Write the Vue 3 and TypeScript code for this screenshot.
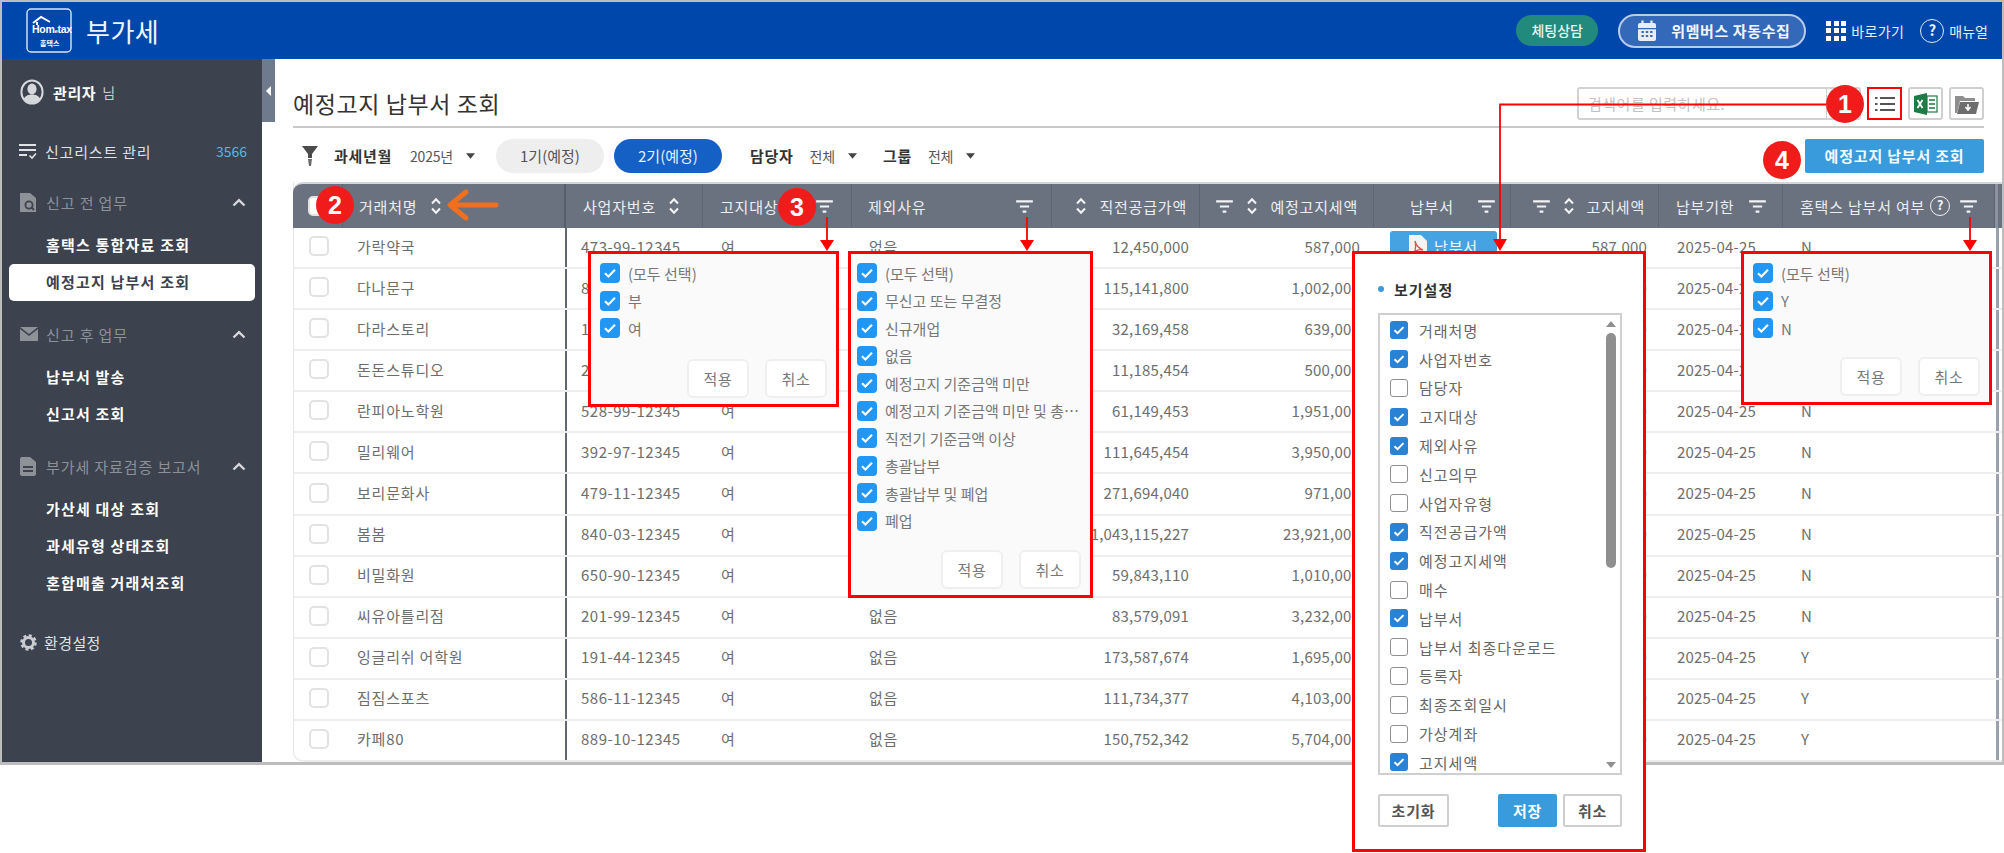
<script setup lang="ts">
type Part = 's' | 'f' | 'q' | 't'
interface Col { key: string; label: string; parts: Part[]; cls: string }
interface Row { name: string; biz: string; supply: string; notice: string; tax: string; flag: string }
interface Opt { label: string; on: boolean }

const cols: Col[] = [
  { key: 'c0', label: '', parts: [], cls: 'c-check' },
  { key: 'c1', label: '거래처명', parts: ['t', 's'], cls: 'c-name' },
  { key: 'c2', label: '사업자번호', parts: ['t', 's'], cls: 'c-biz' },
  { key: 'c3', label: '고지대상', parts: ['t', 'f'], cls: 'c-target' },
  { key: 'c4', label: '제외사유', parts: ['t', 'f'], cls: 'c-reason' },
  { key: 'c5', label: '직전공급가액', parts: ['s', 't'], cls: 'c-supply' },
  { key: 'c6', label: '예정고지세액', parts: ['f', 's', 't'], cls: 'c-notice' },
  { key: 'c7', label: '납부서', parts: ['t', 'f'], cls: 'c-slip' },
  { key: 'c8', label: '고지세액', parts: ['f', 's', 't'], cls: 'c-tax' },
  { key: 'c9', label: '납부기한', parts: ['t', 'f'], cls: 'c-date' },
  { key: 'c10', label: '홈택스 납부서 여부', parts: ['t', 'q', 'f'], cls: 'c-flag' },
]

const rows: Row[] = [
  { name: '가락약국', biz: '473-99-12345', supply: '12,450,000', notice: '587,000', tax: '587,000', flag: 'N' },
  { name: '다나문구', biz: '815-11-12345', supply: '115,141,800', notice: '1,002,000', tax: '1,002,000', flag: 'N' },
  { name: '다라스토리', biz: '124-32-12345', supply: '32,169,458', notice: '639,000', tax: '639,000', flag: 'N' },
  { name: '돈돈스튜디오', biz: '220-18-12345', supply: '11,185,454', notice: '500,000', tax: '500,000', flag: 'N' },
  { name: '란피아노학원', biz: '528-99-12345', supply: '61,149,453', notice: '1,951,000', tax: '1,951,000', flag: 'N' },
  { name: '밀리웨어', biz: '392-97-12345', supply: '111,645,454', notice: '3,950,000', tax: '3,950,000', flag: 'N' },
  { name: '보리문화사', biz: '479-11-12345', supply: '271,694,040', notice: '971,000', tax: '971,000', flag: 'N' },
  { name: '봄봄', biz: '840-03-12345', supply: '1,043,115,227', notice: '23,921,000', tax: '23,921,000', flag: 'N' },
  { name: '비밀화원', biz: '650-90-12345', supply: '59,843,110', notice: '1,010,000', tax: '1,010,000', flag: 'N' },
  { name: '씨유아틀리점', biz: '201-99-12345', supply: '83,579,091', notice: '3,232,000', tax: '3,232,000', flag: 'N' },
  { name: '잉글리쉬 어학원', biz: '191-44-12345', supply: '173,587,674', notice: '1,695,000', tax: '1,695,000', flag: 'Y' },
  { name: '짐짐스포츠', biz: '586-11-12345', supply: '111,734,377', notice: '4,103,000', tax: '4,103,000', flag: 'Y' },
  { name: '카페80', biz: '889-10-12345', supply: '150,752,342', notice: '5,704,000', tax: '5,704,000', flag: 'Y' },
]

const filterTarget: string[] = ['(모두 선택)', '부', '여']
const filterReason: string[] = [
  '(모두 선택)', '무신고 또는 무결정', '신규개업', '없음', '예정고지 기준금액 미만',
  '예정고지 기준금액 미만 및 총괄납부 사업자', '직전기 기준금액 이상', '총괄납부', '총괄납부 및 폐업', '폐업',
]
const filterFlag: string[] = ['(모두 선택)', 'Y', 'N']

const viewOpts: Opt[] = [
  { label: '거래처명', on: true }, { label: '사업자번호', on: true }, { label: '담당자', on: false },
  { label: '고지대상', on: true }, { label: '제외사유', on: true }, { label: '신고의무', on: false },
  { label: '사업자유형', on: false }, { label: '직전공급가액', on: true }, { label: '예정고지세액', on: true },
  { label: '매수', on: false }, { label: '납부서', on: true }, { label: '납부서 최종다운로드', on: false },
  { label: '등록자', on: false }, { label: '최종조회일시', on: false }, { label: '가상계좌', on: false },
  { label: '고지세액', on: true },
]

const popups = [
  { cls: 'pop-target', items: filterTarget },
  { cls: 'pop-reason', items: filterReason },
  { cls: 'pop-flag', items: filterFlag },
]

const badges = [
  { n: '1', cls: 'b1' }, { n: '2', cls: 'b2' }, { n: '3', cls: 'b3' }, { n: '4', cls: 'b4' },
]
</script>

<template>
  <div class="canvas">
    <svg class="defs" width="0" height="0">
      <symbol id="i-sort" viewBox="0 0 12 20">
        <path d="M2 7.5 6 3.2l4 4.3M2 12.5l4 4.3 4-4.3" fill="none" stroke="currentColor" stroke-width="2" />
      </symbol>
      <symbol id="i-filter" viewBox="0 0 18 14">
        <path d="M0 1.5h18M4 7h10M7 12.5h4" fill="none" stroke="currentColor" stroke-width="2.2" />
      </symbol>
      <symbol id="i-check" viewBox="0 0 20 20">
        <path d="M5 10.2l3.4 3.3L15 6.8" fill="none" stroke="#fff" stroke-width="2.2" />
      </symbol>
      <symbol id="i-caret" viewBox="0 0 10 6">
        <path d="M0 0h10L5 6z" fill="currentColor" />
      </symbol>
      <symbol id="i-up" viewBox="0 0 14 9">
        <path d="M1.5 7.5 7 2.2l5.5 5.3" fill="none" stroke="currentColor" stroke-width="2.4" />
      </symbol>
    </svg>

    <div class="window">
      <header class="topbar">
        <div class="logo">
          <svg width="46" height="45" viewBox="0 0 46 45">
            <rect x="1" y="1" width="44" height="43" rx="4" fill="none" stroke="#d9e6f7" stroke-width="1.4" />
            <path d="M7 15 15 9l9 5M11 14v3" fill="none" stroke="#fff" stroke-width="2" />
            <text x="6" y="25" class="logo-en">Hom<tspan font-size="6">e</tspan>tax</text>
            <text x="14" y="38" class="logo-ko">홈택스</text>
          </svg>
        </div>
        <span class="app-title">부가세</span>
        <div class="top-right">
          <span class="chat">체팅상담</span>
          <span class="wemembers">
            <svg width="20" height="22" viewBox="0 0 20 22">
              <path d="M1 5a2 2 0 0 1 2-2h14a2 2 0 0 1 2 2v3H1z" fill="#e9edf6" />
              <path d="M1 9.3h18V19a2 2 0 0 1-2 2H3a2 2 0 0 1-2-2z" fill="#e9edf6" />
              <path d="M5.5 0.5v5M14.5 0.5v5" stroke="#e9edf6" stroke-width="2.2" />
              <path d="M4.5 12h2.4M8.8 12h2.4M13.1 12h2.4M4.5 16h2.4M8.8 16h2.4M13.1 16h2.4" stroke="#3a6cb9" stroke-width="2.2" />
            </svg>
            <b>위멤버스 자동수집</b>
          </span>
          <span class="grid-icon"><i v-for="n in 9" :key="n"></i></span>
          <span class="top-link first">바로가기</span>
          <span class="help">?</span>
          <span class="top-link">매뉴얼</span>
        </div>
      </header>

      <div class="body">
        <aside class="sidebar">
          <div class="user">
            <svg width="24" height="26" viewBox="0 0 24 26">
              <ellipse cx="12" cy="13" rx="10.6" ry="11.6" fill="#3c424e" stroke="#d6d8dc" stroke-width="2" />
              <ellipse cx="12" cy="10" rx="4.6" ry="5.4" fill="#d6d8dc" />
              <path d="M3.6 20c1.6-3.4 4.8-4.6 8.4-4.6s6.8 1.2 8.4 4.6c-2 2.8-5 4-8.4 4s-6.400-1.200-8.400-4z" fill="#d6d8dc" />
            </svg>
            <b>관리자</b><span>님</span>
          </div>
          <div class="side-list">
            <svg width="18" height="18" viewBox="0 0 18 18">
              <path d="M0 3h17M0 8h17M0 13h8" stroke="#e0e2e5" stroke-width="2" fill="none" />
              <path d="M10.500 13.500l2.500 2.500 4-4.500" stroke="#e0e2e5" stroke-width="1.600" fill="none" />
            </svg>
            <span class="side-label">신고리스트 관리</span>
            <span class="count">3566</span>
          </div>

          <div class="side-group g1">
            <svg width="16" height="20" viewBox="0 0 16 20">
              <path d="M0 1h10l6 5v14H0z" fill="#8d9198" />
              <circle cx="9" cy="13" r="3.600" fill="none" stroke="#3c424e" stroke-width="1.800" />
              <path d="M11.500 15.500l2.500 2.500" stroke="#3c424e" stroke-width="1.800" />
            </svg>
            <span>신고 전 업무</span>
            <svg class="chev"><use href="#i-up" /></svg>
          </div>
          <div class="side-item">홈택스 통합자료 조회</div>
          <div class="side-item active">예정고지 납부서 조회</div>

          <div class="side-group g2">
            <svg width="18" height="14" viewBox="0 0 18 14">
              <path d="M0 0h18L9 7z" fill="#8d9198" />
              <path d="M0 2l9 7 9-7v12H0z" fill="#8d9198" />
            </svg>
            <span>신고 후 업무</span>
            <svg class="chev"><use href="#i-up" /></svg>
          </div>
          <div class="side-item">납부서 발송</div>
          <div class="side-item">신고서 조회</div>

          <div class="side-group g3">
            <svg width="16" height="19" viewBox="0 0 16 19">
              <path d="M0 2a2 2 0 0 1 2-2h8l6 5v12a2 2 0 0 1-2 2H2a2 2 0 0 1-2-2z" fill="#8d9198" />
              <path d="M3 10h10M3 14h10" stroke="#3c424e" stroke-width="1.800" />
            </svg>
            <span>부가세 자료검증 보고서</span>
            <svg class="chev"><use href="#i-up" /></svg>
          </div>
          <div class="side-item">가산세 대상 조회</div>
          <div class="side-item">과세유형 상태조회</div>
          <div class="side-item">혼합매출 거래처조회</div>

          <div class="side-setting">
            <svg width="17" height="17" viewBox="0 0 17 17">
              <circle cx="8.500" cy="8.500" r="5" fill="none" stroke="#c9ccd1" stroke-width="3" />
              <circle cx="8.500" cy="8.500" r="7" fill="none" stroke="#c9ccd1" stroke-width="2.600" stroke-dasharray="3 2.500" />
            </svg>
            <span>환경설정</span>
          </div>
        </aside>

        <main class="main">
          <div class="handle"><i></i></div>

          <div class="title-row">
            <h1>예정고지 납부서 조회</h1>
            <div class="search"><span>검색어를 입력하세요.</span><i></i></div>
            <button class="tool list">
              <svg width="20" height="16" viewBox="0 0 20 16">
                <path d="M0 2h2.500M0 8h2.500M0 14h2.500M5 2h15M5 8h15M5 14h15" stroke="#555" stroke-width="2" />
              </svg>
            </button>
            <button class="tool">
              <svg width="24" height="22" viewBox="0 0 24 22">
                <path d="M0 3 13 0v22L0 19z" fill="#1f7a45" />
                <rect x="13" y="3" width="10" height="16" fill="#fff" stroke="#1f7a45" stroke-width="1.200" />
                <path d="M15 7h6M15 11h6M15 15h6" stroke="#1f7a45" stroke-width="1.600" />
                <path d="M3.500 7l5 8M8.500 7l-5 8" stroke="#fff" stroke-width="1.800" />
              </svg>
            </button>
            <button class="tool">
              <svg width="24" height="20" viewBox="0 0 24 20">
                <path d="M0 2h8l2 2h10v3H5L2 19H0z" fill="#8e8e8e" />
                <path d="M5 8h19l-3 12H2z" fill="#6e6e6e" />
                <path d="M13 10v5M10.500 13l2.500 3 2.500-3" stroke="#fff" stroke-width="1.500" fill="none" />
              </svg>
            </button>
          </div>

          <div class="toolbar">
            <svg class="funnel" width="16" height="20" viewBox="0 0 16 20">
              <path d="M0 0h16L10 8v4H6V8z" fill="#4b4b4b" />
              <path d="M6 13h4l-1 7H7z" fill="#6b6b6b" />
            </svg>
            <b class="t-label y">과세년월</b>
            <span class="t-value y">2025년</span>
            <svg class="caret y"><use href="#i-caret" /></svg>
            <span class="pill">1기(예정)</span>
            <span class="pill on">2기(예정)</span>
            <b class="t-label m">담당자</b>
            <span class="t-value">전체</span>
            <svg class="caret"><use href="#i-caret" /></svg>
            <b class="t-label m">그룹</b>
            <span class="t-value">전체</span>
            <svg class="caret"><use href="#i-caret" /></svg>
            <button class="query">예정고지 납부서 조회</button>
          </div>

          <div class="table">
            <div class="tr th">
              <div v-for="c in cols" :key="c.key" class="cell" :class="c.cls">
                <span v-if="c.key === 'c0'" class="tick head"></span>
                <template v-for="(p, i) in c.parts" :key="i">
                  <span v-if="p === 't'" class="h-text">{{ c.label }}</span>
                  <svg v-else-if="p === 's'" class="ic-sort"><use href="#i-sort" /></svg>
                  <svg v-else-if="p === 'f'" class="ic-filter"><use href="#i-filter" /></svg>
                  <span v-else class="q">?</span>
                </template>
              </div>
              <div class="edge"></div>
            </div>
            <div v-for="(r, idx) in rows" :key="r.biz" class="tr td">
              <div class="cell c-check"><span class="tick"></span></div>
              <div class="cell c-name">{{ r.name }}</div>
              <div class="cell c-biz">{{ r.biz }}</div>
              <div class="cell c-target">여</div>
              <div class="cell c-reason">없음</div>
              <div class="cell c-supply num">{{ r.supply }}</div>
              <div class="cell c-notice num">{{ r.notice }}</div>
              <div class="cell c-slip slip">
                <span class="slip-btn">
                  <svg width="18" height="22" viewBox="0 0 18 22">
                    <path d="M0 0h12l6 6v16H0z" fill="#f3f3f3" />
                    <path d="M6 6c1 4 3 7 8 9-4-1-7 0-9 3 2-4 2-8 1-12z" fill="none" stroke="#d9534f" stroke-width="1.300" />
                  </svg>
                  납부서
                </span>
              </div>
              <div class="cell c-tax num">{{ r.tax }}</div>
              <div class="cell c-date">2025-04-25</div>
              <div class="cell c-flag">{{ r.flag }}</div>
              <div class="edge" :data-row="idx"></div>
            </div>
          </div>
        </main>
      </div>
    </div>

    <svg class="marks" width="2004" height="853" viewBox="0 0 2004 853">
      <path d="M1826 104.500H1500V240M827 217v24M1027 217v24M1970 217v24" fill="none" stroke="#f00" stroke-width="1.800" />
      <path d="M1493 239h14l-7 12zM820 240h14l-7 11zM1020 240h14l-7 11zM1963 240h14l-7 11z" fill="#f00" />
      <path d="M496 205H456" stroke="#f0701f" stroke-width="5" stroke-linecap="round" />
      <path d="M466 192 450 205l16 13" fill="none" stroke="#f0701f" stroke-width="5" stroke-linecap="round" stroke-linejoin="round" />
    </svg>

    <div v-for="b in badges" :key="b.n" class="badge" :class="b.cls">{{ b.n }}</div>

    <div v-for="p in popups" :key="p.cls" class="pop" :class="p.cls">
      <label v-for="it in p.items" :key="it" class="pop-row">
        <span class="pop-box"><svg width="20" height="20"><use href="#i-check" /></svg></span>
        <span class="pop-text">{{ it }}</span>
      </label>
      <div class="pop-actions">
        <button>적용</button>
        <button>취소</button>
      </div>
    </div>

    <div class="view-pop">
      <div class="view-title"><i></i>보기설정</div>
      <div class="view-list">
        <div v-for="o in viewOpts" :key="o.label" class="view-row">
          <span class="view-box" :class="{ on: o.on }">
            <svg v-if="o.on" width="18" height="18"><use href="#i-check" /></svg>
          </span>
          <span>{{ o.label }}</span>
        </div>
        <div class="scroll">
          <i class="arrow up"></i>
          <i class="thumb"></i>
          <i class="arrow down"></i>
        </div>
      </div>
      <div class="view-actions">
        <button class="reset">초기화</button>
        <button class="save">저장</button>
        <button class="cancel">취소</button>
      </div>
    </div>
  </div>
</template>

<style scoped>
.canvas {
  position: relative;
  width: 2004px;
  height: 853px;
  overflow: hidden;
  background: #fff;
  font-family: "Noto Sans CJK KR", "Noto Sans", sans-serif;
  font-size: 15px;
  color: #666;
}
.defs { position: absolute; }
button { font-family: inherit; cursor: pointer; }

.window {
  box-sizing: border-box;
  height: 765px;
  display: flex;
  flex-direction: column;
  border: 2px solid #bdbdbd;
  border-bottom-width: 3px;
}

/* top bar */
.topbar {
  height: 57px;
  flex: none;
  display: flex;
  align-items: center;
  background: #0047ab;
  padding-left: 24px;
  padding-right: 14px;
  color: #fff;
}
.logo { width: 46px; height: 45px; }
.logo-en { font: 700 10.5px "Liberation Sans", sans-serif; fill: #fff; letter-spacing: -0.3px; }
.logo-ko { font: 700 7px "Noto Sans CJK KR", sans-serif; fill: #fff; }
.app-title { margin-left: 14px; font-size: 26px; letter-spacing: 0.5px; color: #f2f6fc; }
.top-right { margin-left: auto; display: flex; align-items: center; }
.chat {
  width: 82px; height: 31px; line-height: 30px; text-align: center;
  border-radius: 16px; background: #22897d; font-size: 14px; font-weight: 500; color: #e8f5f3;
}
.wemembers {
  box-sizing: border-box;
  margin-left: 20px;
  width: 188px; height: 34px;
  display: flex; align-items: center;
  padding-left: 17px;
  border-radius: 17px;
  background: #3369b8;
  border: 2px solid #b8cbe8;
}
.wemembers b { margin-left: 14px; font-size: 15px; letter-spacing: 0.6px; font-weight: 700; color: #f2f5fb; }
.grid-icon {
  margin-left: 20px;
  width: 20px; height: 20px;
  display: grid; grid-template-columns: repeat(3, 5px); grid-auto-rows: 5px; gap: 2.5px;
}
.grid-icon i { background: #fff; }
.top-link { font-size: 14px; color: #e6edf8; margin-left: 5px; }
.top-link.first { letter-spacing: 0.4px; }
.help {
  box-sizing: border-box;
  margin-left: 16px;
  width: 24px; height: 24px; line-height: 20px; text-align: center;
  border: 1.5px solid #dfe8f5; border-radius: 50%; font-size: 15px; font-weight: 700; color: #eef3fa;
}

.body { flex: 1; display: flex; min-height: 0; }

/* sidebar */
.sidebar {
  width: 260px;
  flex: none;
  box-sizing: border-box;
  background: #3c424e;
  padding-top: 20px;
  color: #e6e7ea;
}
.user { display: flex; align-items: center; height: 26px; padding-left: 18px; }
.user b { margin-left: 9px; font-size: 15px; letter-spacing: 0.6px; color: #fff; }
.user span { margin-left: 6px; font-size: 14px; color: #c9ccd1; }
.side-list { display: flex; align-items: center; height: 24px; margin-top: 34px; padding-left: 17px; }
.side-label { margin-left: 8px; font-size: 15px; letter-spacing: 0.8px; color: #dfe1e5; }
.count { margin-left: auto; margin-right: 15px; font-size: 14px; color: #5cb6e0; }
.side-group { display: flex; align-items: center; height: 24px; margin-top: 21px; padding-left: 18px; color: #8d9198; }
.side-group.g1 { margin-top: 27px; margin-bottom: 13px; }
.side-group.g2, .side-group.g3 { margin-bottom: 13px; }
.side-group span { position: relative; margin-left: 10px; font-size: 15px; letter-spacing: 0.9px; }
.side-group.g2 span { margin-left: 8px; }
.side-group .chev { width: 14px; height: 9px; margin-left: auto; margin-right: 16px; color: #d5d7da; }
.side-item {
  height: 37px; line-height: 36px; padding-left: 44px;
  font-size: 15px; font-weight: 700; letter-spacing: 1.2px; color: #fff;
}
.side-item.active {
  margin: 0 7px; padding-left: 37px;
  background: #fff; color: #3c424e; border-radius: 5px;
}
.side-setting { display: flex; align-items: center; height: 24px; margin-top: 28px; padding-left: 18px; }
.side-setting span { margin-left: 7px; font-size: 15px; letter-spacing: 0.4px; color: #dfe1e5; }

/* main */
.main { position: relative; flex: 1; min-width: 0; padding-left: 31px; background: #fff; }
.handle {
  position: absolute; left: 0; top: 0;
  width: 13px; height: 63px; background: #6f7a8c;
  display: flex; align-items: center; justify-content: center;
}
.handle i { border: 5px solid transparent; border-right: 5px solid #fff; border-left: 0; }

.title-row {
  box-sizing: border-box;
  height: 69px;
  margin-right: 18px;
  display: flex; align-items: flex-end;
  padding-bottom: 6px;
  border-bottom: 2px solid #c9c9c9;
}
.title-row h1 {
  margin: 0 auto 0 0;
  font-size: 23px; font-weight: 400; letter-spacing: 0.6px; line-height: 34px; color: #333;
}
.search {
  box-sizing: border-box;
  width: 284px; height: 33px;
  display: flex; align-items: center; justify-content: space-between;
  border: 2px solid #d2d2d2; border-radius: 3px;
  padding-left: 9px;
  color: #c2c2c2; font-size: 15px; letter-spacing: 0.5px;
}
.search i { width: 1px; height: 100%; background: #d2d2d2; margin-right: 32px; }
.tool {
  box-sizing: border-box;
  width: 35px; height: 33px; margin-left: 6px; padding: 0;
  display: flex; align-items: center; justify-content: center;
  background: #fff; border: 2px solid #cfcfcf; border-radius: 3px;
}
.tool.list { border: 2.500px solid #f00; border-radius: 0; }

.toolbar {
  height: 54px;
  margin-right: 18px;
  display: flex; align-items: center;
  padding-left: 9px;
  padding-top: 1px;
  box-sizing: border-box;
}
.funnel { margin-right: 16px; }
.t-label { font-size: 15px; letter-spacing: 0.7px; color: #333; }
.t-label.m { margin-left: 0; }
.t-value { margin-left: 16px; font-size: 14px; letter-spacing: -0.2px; color: #555; }
.t-value.y { margin-left: 18px; }
.caret { width: 9px; height: 6px; margin-left: 13px; margin-right: 26px; color: #444; }
.caret.y { margin-right: 21px; }
.pill {
  width: 108px; height: 34px; line-height: 33px; text-align: center;
  border-radius: 17px; background: #eeeeee; font-size: 15px; color: #555;
}
.pill.on { margin-left: 10px; margin-right: 28px; background: #1560c4; color: #e7f0fb; }
.query {
  margin-left: auto;
  width: 179px; height: 34px; padding: 0;
  background: #3a9bdc; border: 0; border-radius: 2px;
  font-size: 15px; font-weight: 700; letter-spacing: 0.8px; color: #f3f9fd;
}

/* table */
.table {
  height: 578px;
  display: flex; flex-direction: column;
  border-left: 1px solid #e6e6e6;
  border-bottom: 2px solid #ececec;
  border-radius: 0 0 0 10px;
}
.tr {
  display: grid;
  grid-template-columns: 50px 223px 137px 149px 200px 148px 174px 137px 148px 124px 212px 1fr;
  box-sizing: border-box;
}
.th {
  height: 46px; flex: none;
  background: #6a7280;
  color: #eceef1;
  border-top: 2px solid #d2d5da;
  border-radius: 10px 0 0 0;
  margin-left: -1px;
}
.td { flex: 1; min-height: 0; border-bottom: 2px solid #eeeeee; }
.td:last-child { border-bottom: 0; }
.cell {
  display: flex; align-items: center;
  min-width: 0;
  padding-left: 17px;
  white-space: nowrap;
  letter-spacing: 0.8px;
  font-size: 15px;
}
.td .cell { color: #6d6d6d; padding-bottom: 3px; box-sizing: border-box; }
.th .cell { border-right: 1px solid #5d6573; }
.c-check { padding-left: 15px; }
.c-name { padding-left: 13px; }
.th .c-name { padding-left: 16px; }
.th .c-check { border-right: 1px solid #5d6573; }
.c-name { border-right: 2px solid #5f6773; }
.th .c-name { border-right: 2px solid #565e6a; }
.th .c-name .ic-sort { margin-left: 13px; }
.th .c-biz .ic-sort { margin-left: 12px; }
.td .c-biz { letter-spacing: 0.5px; padding-left: 14px; }
.c-target { justify-content: flex-start; }
.th .c-target .ic-filter { margin-left: 38px; }
.th .c-reason { justify-content: space-between; padding-left: 16px; padding-right: 18px; }
.num, .th .c-supply, .th .c-notice, .th .c-tax { justify-content: flex-end; }
.num { letter-spacing: 0.2px; }
.c-supply { padding-right: 12px; }
.c-notice { padding-right: 15px; }
.c-tax { padding-right: 13px; }
.th .c-supply .ic-sort, .th .c-notice .ic-sort, .th .c-tax .ic-sort { margin-right: 12px; }
.th .c-notice .ic-filter, .th .c-tax .ic-filter { margin-right: 13px; }
.th .c-slip { padding-left: 36px; justify-content: space-between; padding-right: 15px; }
.th .c-date { justify-content: space-between; padding-right: 16px; }
.td .c-date { letter-spacing: 0.2px; }
.th .c-flag { padding-right: 16px; }
.th .c-flag .ic-filter { margin-left: 10px; }
.td .c-reason { padding-left: 16px; }
.td .c-slip { padding: 0 0 3px 15px; }
.edge { border-left: 3px solid #9aa1ac; }
.th .edge { border-left-color: #8b929e; }

.h-text { color: #eceef1; }
.ic-sort { width: 12px; height: 20px; flex: none; color: #f2f3f5; }
.ic-filter { width: 17px; height: 13px; flex: none; color: #f2f3f5; }
.q {
  box-sizing: border-box;
  flex: none;
  margin-left: 5px;
  width: 20px; height: 20px; line-height: 16px; text-align: center;
  border: 1.5px solid #f2f3f5; border-radius: 50%;
  font-size: 13px; font-weight: 700; letter-spacing: 0; color: #f2f3f5;
}
.tick {
  box-sizing: border-box;
  display: block;
  width: 20px; height: 20px;
  border: 2px solid #e2e2e2; border-radius: 5px; background: #fff;
}
.slip-btn {
  display: flex; align-items: center; justify-content: center; gap: 7px;
  width: 107px; height: 30px;
  border-radius: 3px; background: #46a3e2; color: #f4fafd;
  font-size: 15px; letter-spacing: 0.8px;
}

/* annotations over the page */
.marks { position: absolute; left: 0; top: 0; pointer-events: none; }
.badge {
  position: absolute;
  width: 38px; height: 38px; line-height: 37px; text-align: center;
  border-radius: 50%;
  background: #f01c1c; color: #fff;
  font: 700 25px/38px "Liberation Sans", sans-serif;
}
.b1 { left: 1826px; top: 85px; }
.b2 { left: 316px; top: 186px; }
.b3 { left: 778px; top: 188px; }
.b4 { left: 1763px; top: 141px; }

.pop {
  position: absolute;
  box-sizing: border-box;
  top: 251px;
  background: #fafafa;
  border: 3px solid #f00;
  padding: 5.500px 9px 6px;
  display: flex; flex-direction: column;
}
.pop-target { left: 588px; width: 251px; height: 156px; }
.pop-reason { left: 848px; width: 245px; height: 347px; padding-left: 6px; }
.pop-flag { left: 1741px; width: 251px; height: 154px; }
.pop-row { display: flex; align-items: center; height: 27.500px; min-width: 0; }
.pop-box {
  flex: none;
  width: 20px; height: 20px;
  border-radius: 4px; background: #2196f3;
}
.pop-box svg { display: block; }
.pop-text {
  margin-left: 8px;
  overflow: hidden; text-overflow: ellipsis; white-space: nowrap;
  font-size: 15px; color: #777;
}
.pop-actions { margin-top: auto; display: flex; justify-content: flex-end; gap: 16px; }
.pop-actions button {
  box-sizing: border-box;
  width: 62px; height: 39px; padding: 0;
  background: #fff; border: 2px solid #efefef; border-radius: 6px;
  font-size: 15px; letter-spacing: 0.8px; color: #777;
}

.view-pop {
  position: absolute;
  box-sizing: border-box;
  left: 1352px; top: 251px;
  width: 294px; height: 601px;
  background: #fff;
  border: 3px solid #f00;
  padding: 23px 21px 0 23px;
}
.view-title {
  display: flex; align-items: center;
  height: 24px;
  font-size: 15px; font-weight: 700; letter-spacing: 1px; color: #333;
}
.view-title i { width: 6px; height: 6px; margin-right: 10px; border-radius: 50%; background: #3a9bdc; }
.view-list {
  position: relative;
  box-sizing: border-box;
  margin-top: 12px;
  height: 462px;
  padding: 1px 0 0 10px;
  border: 2px solid #cfcfcf;
  overflow: hidden;
}
.view-row {
  display: flex; align-items: center;
  height: 28.800px;
  font-size: 15px; letter-spacing: 1px; color: #666;
}
.view-box {
  box-sizing: border-box;
  flex: none;
  width: 18px; height: 18px; margin-right: 11px;
  border: 1.500px solid #8f8f8f; border-radius: 3px; background: #fff;
}
.view-box.on { border: 0; background: #2a82d4; }
.view-box svg { display: block; }
.scroll {
  position: absolute; right: 3px; top: 0; bottom: 0; width: 12px;
  display: flex; flex-direction: column; align-items: center;
}
.scroll .arrow { width: 0; height: 0; border: 5.500px solid transparent; }
.scroll .up { margin-top: 6px; border-top: 0; border-bottom: 6px solid #8f8f8f; }
.scroll .down { margin-top: auto; margin-bottom: 5px; border-bottom: 0; border-top: 6px solid #8f8f8f; }
.scroll .thumb { width: 10px; height: 235px; margin-top: 6px; border-radius: 5px; background: #8f8f8f; }
.view-actions { display: flex; margin-top: 19px; }
.view-actions button {
  box-sizing: border-box;
  height: 33px; padding: 0;
  background: #fff; border: 2px solid #cfcfcf; border-radius: 2px;
  font-size: 15px; font-weight: 700; letter-spacing: 0.8px; color: #555;
}
.view-actions .reset { width: 71px; margin-right: auto; }
.view-actions .save { width: 59px; margin-right: 6px; background: #3a9bdc; border-color: #3a9bdc; color: #fff; }
.view-actions .cancel { width: 59px; }
</style>

<style>
html, body { margin: 0; background: #fff; }
</style>
